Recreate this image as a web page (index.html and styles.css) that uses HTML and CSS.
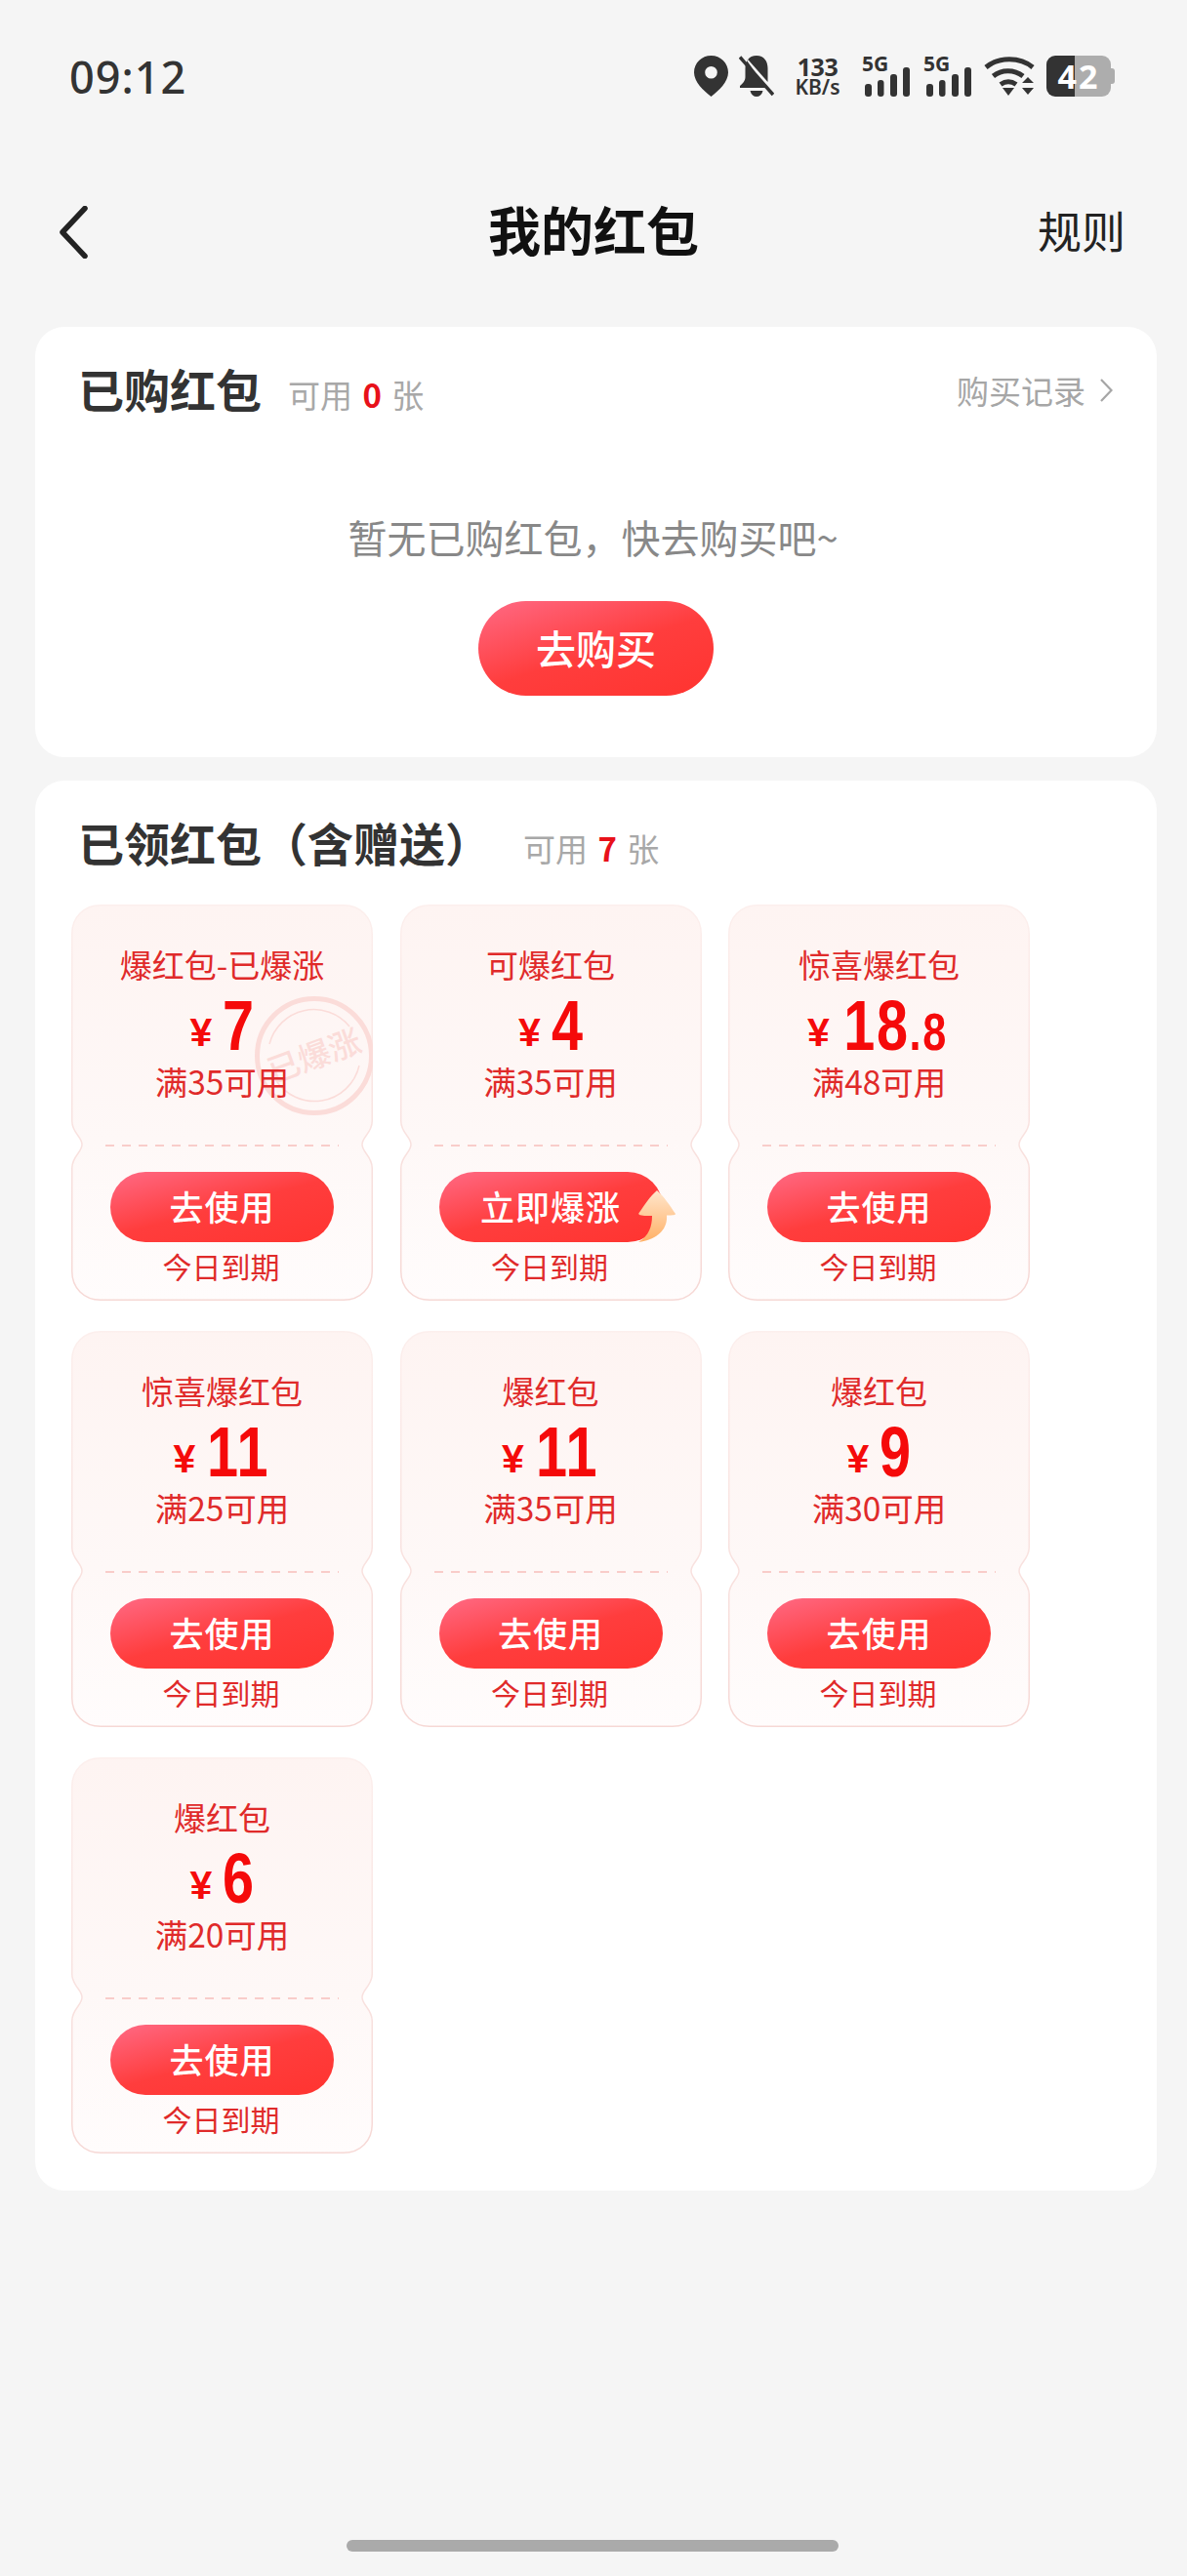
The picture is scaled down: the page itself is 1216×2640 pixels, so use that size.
FILE: index.html
```html
<!DOCTYPE html>
<html lang="zh-CN">
<head>
<meta charset="UTF-8">
<meta name="viewport" content="width=device-width, initial-scale=1.0">
<title>我的红包</title>
<link rel="stylesheet" href="styles.css">
</head>
<body>

<svg class="defs" width="0" height="0">
  <defs>
    <linearGradient id="couponFill" x1="0" y1="0" x2="0" y2="1">
      <stop offset="0" stop-color="#fef4f2"/>
      <stop offset="0.6" stop-color="#fef8f7"/>
      <stop offset="1" stop-color="#fffcfc"/>
    </linearGradient>
    <linearGradient id="couponLine" x1="0" y1="0" x2="0" y2="1">
      <stop offset="0" stop-color="#fcefed"/>
      <stop offset="1" stop-color="#f6d8d5"/>
    </linearGradient>
    <linearGradient id="arrowFill" x1="0" y1="0" x2="0" y2="1">
      <stop offset="0" stop-color="#ffe6cc"/>
      <stop offset="1" stop-color="#ffb066"/>
    </linearGradient>
    <symbol id="couponShape" viewBox="0 0 309 406">
      <path d="M30 .75H279C296 .75 308.25 13 308.25 30V222C308.25 234 298 238 298 246C298 254 308.25 258 308.25 270V376C308.25 393 296 405.25 279 405.25H30C13 405.25 .75 393 .75 376V270C.75 258 11 254 11 246C11 238 .75 234 .75 222V30C.75 13 13 .75 30 .75Z" fill="url(#couponFill)" stroke="url(#couponLine)" stroke-width="1.5"/>
    </symbol>
    <symbol id="bars" viewBox="0 0 46 30">
      <rect x="0" y="17" width="7" height="13" rx="3" fill="#333"/>
      <rect x="13" y="13" width="6.5" height="17" rx="3" fill="#333"/>
      <rect x="26" y="7" width="7" height="23" rx="3" fill="#333"/>
      <rect x="39" y="0" width="7" height="30" rx="3" fill="#333"/>
    </symbol>
  </defs>
</svg>

<div class="status-bar">
  <span class="clock">09:12</span>
  <div class="status-icons">
    <svg class="ic-pin" width="35" height="42" viewBox="0 0 35 42">
      <path fill-rule="evenodd" d="M17.5 0C7.8 0 0 7.7 0 17.2C0 27 9.5 35.5 17.5 42C25.500 35.500 35 27 35 17.200C35 7.700 27.200 0 17.500 0ZM17.500 11A6.300 6.300 0 1 1 17.500 23.600A6.300 6.300 0 1 1 17.500 11Z" fill="#333"/>
    </svg>
    <svg class="ic-bell" width="36" height="42" viewBox="0 0 36 42">
      <path d="M18 0C10 0 6.500 6 6.500 13V22C6.500 26 3.500 29 1 31V33H28L8 5ZM29.500 27V13C29.500 6 26 0 18 0C14 0 11 1.500 9.200 4ZM11.500 36C12.500 40 15 42 18 42C21 42 23.500 40 24.500 36Z" fill="#333"/>
      <path d="M1 1.500L35 40" stroke="#333" stroke-width="3.500"/>
    </svg>
    <div class="speed"><b>133</b><b class="speed-unit">KB/s</b></div>
    <div class="signal"><b>5G</b><svg width="46" height="30"><use href="#bars"/></svg></div>
    <div class="signal"><b>5G</b><svg width="46" height="30"><use href="#bars"/></svg></div>
    <svg class="ic-wifi" width="52" height="42" viewBox="0 0 52 42">
      <path d="M2 12C15 1 37 1 50 12" fill="none" stroke="#333" stroke-width="5"/>
      <path d="M9.500 21C18 14 31 14 40 21" fill="none" stroke="#333" stroke-width="5"/>
      <path d="M17 29.500C22 26 28 26 33 29.500" fill="none" stroke="#333" stroke-width="5"/>
      <path d="M19 33H31L25 41ZM39 28L45 22L51 28ZM39 33H51L45 40Z" fill="#333"/>
    </svg>
    <div class="battery">42</div>
  </div>
</div>

<div class="nav-bar">
  <svg class="back" width="30" height="54" viewBox="0 0 30 54">
    <path d="M27 2.500L4 27L27 51.500" fill="none" stroke="#222" stroke-width="5.500" stroke-linecap="round" stroke-linejoin="round"/>
  </svg>
  <h1>我的红包</h1>
  <span class="rules">规则</span>
</div>

<section class="card card-bought">
  <div class="card-head">
    <h2>已购红包</h2>
    <span class="count">可用 <b>0</b> 张</span>
    <span class="record">购买记录
      <svg width="14" height="24" viewBox="0 0 14 24"><path d="M2 1L12.500 12L2 23" fill="none" stroke="#a6a6a6" stroke-width="2.200"/></svg>
    </span>
  </div>
  <div class="empty">
    <p>暂无已购红包&#xFF0C;快去购买吧~</p>
    <button class="buy-btn">去购买</button>
  </div>
</section>

<section class="card card-got">
  <div class="card-head">
    <h2>已领红包&#xFF08;含赠送&#xFF09;</h2>
    <span class="count count-wide">可用 <b>7</b> 张</span>
  </div>

  <div class="coupons">

    <div class="coupon">
      <svg class="coupon-bg" width="309" height="406"><use href="#couponShape"/></svg>
      <svg class="stamp" width="124" height="124" viewBox="0 0 124 124">
        <circle cx="62" cy="62" r="58.500" fill="none" stroke="#fbdcd9" stroke-width="5"/>
        <path d="M16 50A47 47 0 0 1 98 32M108 72A47 47 0 0 1 22 86" fill="none" stroke="#fbdcd9" stroke-width="1.500"/>
        <text x="62" y="74" text-anchor="middle" transform="rotate(-20 62 62)" class="stamp-text">已爆涨</text>
      </svg>
      <div class="coupon-top">
        <div class="coupon-name">爆红包-已爆涨</div>
        <div class="amount"><span class="yen">¥</span><span class="num">7</span></div>
        <div class="limit">满35可用</div>
      </div>
      <div class="coupon-bottom">
        <button class="use-btn">去使用</button>
        <div class="expire">今日到期</div>
      </div>
    </div>

    <div class="coupon">
      <svg class="coupon-bg" width="309" height="406"><use href="#couponShape"/></svg>
      <div class="coupon-top">
        <div class="coupon-name">可爆红包</div>
        <div class="amount"><span class="yen">¥</span><span class="num">4</span></div>
        <div class="limit">满35可用</div>
      </div>
      <div class="coupon-bottom">
        <button class="use-btn">立即爆涨
          <svg class="up-arrow" width="38" height="53" viewBox="0 0 38 53">
            <path d="M19 0C26 6 32 15 38 24C38 25 36 25.500 29 25.500C30 38 22 50 0 53C10 47 14 38 14 26C9 26 3 26 1 25C0 24 0 23.500 1 22.500C6 15 12 6 19 0Z" fill="url(#arrowFill)"/>
          </svg>
        </button>
        <div class="expire">今日到期</div>
      </div>
    </div>

    <div class="coupon">
      <svg class="coupon-bg" width="309" height="406"><use href="#couponShape"/></svg>
      <div class="coupon-top">
        <div class="coupon-name">惊喜爆红包</div>
        <div class="amount"><span class="yen">¥</span><span class="num num-long">18<small>.8</small></span></div>
        <div class="limit">满48可用</div>
      </div>
      <div class="coupon-bottom">
        <button class="use-btn">去使用</button>
        <div class="expire">今日到期</div>
      </div>
    </div>

    <div class="coupon">
      <svg class="coupon-bg" width="309" height="406"><use href="#couponShape"/></svg>
      <div class="coupon-top">
        <div class="coupon-name">惊喜爆红包</div>
        <div class="amount"><span class="yen">¥</span><span class="num num-two">11</span></div>
        <div class="limit">满25可用</div>
      </div>
      <div class="coupon-bottom">
        <button class="use-btn">去使用</button>
        <div class="expire">今日到期</div>
      </div>
    </div>

    <div class="coupon">
      <svg class="coupon-bg" width="309" height="406"><use href="#couponShape"/></svg>
      <div class="coupon-top">
        <div class="coupon-name">爆红包</div>
        <div class="amount"><span class="yen">¥</span><span class="num num-two">11</span></div>
        <div class="limit">满35可用</div>
      </div>
      <div class="coupon-bottom">
        <button class="use-btn">去使用</button>
        <div class="expire">今日到期</div>
      </div>
    </div>

    <div class="coupon">
      <svg class="coupon-bg" width="309" height="406"><use href="#couponShape"/></svg>
      <div class="coupon-top">
        <div class="coupon-name">爆红包</div>
        <div class="amount"><span class="yen">¥</span><span class="num">9</span></div>
        <div class="limit">满30可用</div>
      </div>
      <div class="coupon-bottom">
        <button class="use-btn">去使用</button>
        <div class="expire">今日到期</div>
      </div>
    </div>

    <div class="coupon">
      <svg class="coupon-bg" width="309" height="406"><use href="#couponShape"/></svg>
      <div class="coupon-top">
        <div class="coupon-name">爆红包</div>
        <div class="amount"><span class="yen">¥</span><span class="num">6</span></div>
        <div class="limit">满20可用</div>
      </div>
      <div class="coupon-bottom">
        <button class="use-btn">去使用</button>
        <div class="expire">今日到期</div>
      </div>
    </div>

  </div>
</section>

<div class="home-bar"></div>

</body>
</html>
```

FILE: styles.css
```css
* {
  box-sizing: border-box;
}
html, body {
  margin: 0;
  padding: 0;
}
body {
  width: 1216px;
  height: 2640px;
  background: #f5f5f5;
  font-family: "Noto Sans CJK SC", "Noto Sans", sans-serif;
  color: #333;
  overflow: hidden;
  display: flex;
  flex-direction: column;
}
.defs {
  position: absolute;
}

/* status bar */
.status-bar {
  height: 156px;
  padding: 56px 78px 0 71px;
  display: flex;
  justify-content: space-between;
  align-items: flex-start;
  flex: none;
}
.clock {
  font-family: "Noto Sans", sans-serif;
  font-size: 45px;
  font-weight: 500;
  line-height: 46px;
  letter-spacing: 1px;
}
.status-icons {
  display: flex;
  align-items: flex-start;
  padding-top: 1px;
}
.ic-bell {
  margin-left: 11px;
}
.speed {
  margin-left: 20px;
  width: 49px;
  height: 42px;
  display: flex;
  flex-direction: column;
  align-items: center;
  font-family: "Noto Sans", sans-serif;
  font-size: 25px;
  line-height: 23px;
  white-space: nowrap;
}
.speed b {
  font-weight: 700;
  letter-spacing: -0.5px;
}
.speed .speed-unit {
  font-size: 21px;
  line-height: 19px;
  font-weight: 600;
  letter-spacing: 0;
}
.signal {
  margin-left: 21px;
  width: 49px;
  height: 42px;
  display: flex;
  flex-direction: column;
  font-family: "Noto Sans", sans-serif;
  font-size: 21px;
  line-height: 16px;
}
.signal + .signal {
  margin-left: 14px;
}
.signal b {
  font-weight: 700;
  height: 12px;
}
.signal svg {
  margin-left: 3px;
}
.ic-wifi {
  margin-left: 13px;
}
.battery {
  margin-left: 12px;
  width: 66px;
  height: 42px;
  border-radius: 9px;
  background: linear-gradient(90deg, #333 0, #333 29px, #adadad 29px);
  color: #fff;
  font-family: "Noto Sans", sans-serif;
  font-size: 34px;
  font-weight: 700;
  line-height: 42px;
  text-align: center;
  letter-spacing: 2px;
  position: relative;
}
.battery::after {
  content: "";
  position: absolute;
  right: -4px;
  top: 13px;
  width: 4px;
  height: 16px;
  background: #adadad;
  border-radius: 0 3px 3px 0;
}

/* nav */
.nav-bar {
  height: 179px;
  padding: 55px 63px 0 60px;
  display: flex;
  justify-content: space-between;
  align-items: flex-start;
  position: relative;
  flex: none;
}
.nav-bar h1 {
  position: absolute;
  left: 0;
  right: 0;
  top: 44px;
  margin: 0;
  text-align: center;
  font-size: 54px;
  font-weight: 700;
  line-height: 70px;
  color: #111;
}
.rules {
  margin-top: -5px;
  font-size: 45px;
  line-height: 60px;
  color: #222;
}

/* white cards */
.card {
  margin: 0 31px 0 36px;
  background: #fff;
  border-radius: 30px;
  flex: none;
}
.card-bought {
  height: 441px;
}
.card-got {
  margin-top: 24px;
  height: 1445px;
}
.card-head {
  height: 127px;
  padding: 33px 45px 0 44px;
  display: flex;
  align-items: baseline;
}
.card-head h2 {
  margin: 0;
  font-size: 47px;
  font-weight: 700;
  line-height: 60px;
  color: #333;
  white-space: nowrap;
}
.count {
  margin-left: 27px;
  font-size: 33px;
  color: #a8a8a8;
}
.count-wide {
  margin-left: 33px;
}
.count-wide b {
  padding: 0 2px;
}
.count b {
  color: #e8111a;
  font-weight: 700;
  padding: 0 3px;
}
.record {
  margin-left: auto;
  font-size: 33px;
  color: #a6a6a6;
  display: flex;
  align-items: center;
  gap: 14px;
  position: relative;
  top: -4px;
}

/* empty state */
.empty {
  display: flex;
  flex-direction: column;
  align-items: center;
}
.empty p {
  margin: 60px 0 0;
  padding-right: 6px;
  font-size: 40px;
  line-height: 56px;
  color: #888;
}
.buy-btn {
  margin-top: 38px;
  width: 241px;
  height: 97px;
  border: none;
  border-radius: 49px;
  color: #fff;
  font-family: inherit;
  font-size: 41px;
  font-weight: 500;
  padding: 0 0 4px;
  background: linear-gradient(162deg, #ff6a85 0%, #ff3d3d 52%, #ff3430 100%);
}

/* coupons */
.coupons {
  padding-left: 37px;
  display: grid;
  grid-template-columns: repeat(3, 309px);
  column-gap: 27.5px;
  row-gap: 31px;
}
.coupon {
  width: 309px;
  height: 406px;
  position: relative;
  color: #e02a2a;
  overflow: hidden;
}
.coupon-bg {
  position: absolute;
  left: 0;
  top: 0;
}
.stamp {
  position: absolute;
  right: -2px;
  top: 93px;
}
.stamp-text {
  font-family: "Noto Sans CJK SC", sans-serif;
  font-size: 33px;
  font-weight: 500;
  fill: #fbdcd9;
}
.coupon-top {
  height: 246px;
  padding-top: 41px;
  display: flex;
  flex-direction: column;
  align-items: center;
  position: relative;
}
.coupon-name {
  font-size: 33px;
  line-height: 40px;
  white-space: nowrap;
}
.amount {
  height: 76px;
  margin-top: 5px;
  display: flex;
  align-items: baseline;
  justify-content: center;
  color: #f50a0a;
  line-height: 76px;
}
.yen {
  font-family: "Liberation Sans", sans-serif;
  font-size: 41px;
  font-weight: 700;
  margin-right: 11px;
  transform: translateY(-4px);
}
/* digits in the shot are narrower than any installed bold face */
.num {
  font-family: "Liberation Sans", sans-serif;
  font-size: 72px;
  font-weight: 700;
  display: inline-block;
  transform: scaleX(.8);
  margin: 0 -4px;
}
.num-two {
  letter-spacing: 2px;
  margin: 0 -7px;
}
.num-long {
  letter-spacing: 2px;
  margin: 0 -10px;
}
.num small {
  font-size: 54px;
}
.limit {
  font-size: 33.500px;
  line-height: 38px;
}
.coupon-bottom {
  position: relative;
  padding-top: 28px;
  display: flex;
  flex-direction: column;
  align-items: center;
}
.coupon-bottom::before {
  content: "";
  position: absolute;
  left: 35px;
  right: 35px;
  top: 0;
  height: 2px;
  background: repeating-linear-gradient(90deg, #f9cdca 0, #f9cdca 9px, transparent 9px, transparent 17px);
}
.use-btn {
  width: 229px;
  height: 72px;
  border: none;
  border-radius: 36px;
  color: #fff;
  font-family: inherit;
  font-size: 35px;
  font-weight: 500;
  letter-spacing: 1px;
  padding: 0 0 3px;
  position: relative;
  background: linear-gradient(165deg, #ff6a85 0%, #ff3d3d 50%, #ff3430 100%);
}
.up-arrow {
  position: absolute;
  right: -13px;
  top: 19px;
}
.expire {
  font-size: 30px;
  line-height: 48px;
  padding-right: 2px;
}

.home-bar {
  position: absolute;
  left: 355px;
  top: 2603px;
  width: 504px;
  height: 12px;
  border-radius: 6px;
  background: #aaa;
}
```
